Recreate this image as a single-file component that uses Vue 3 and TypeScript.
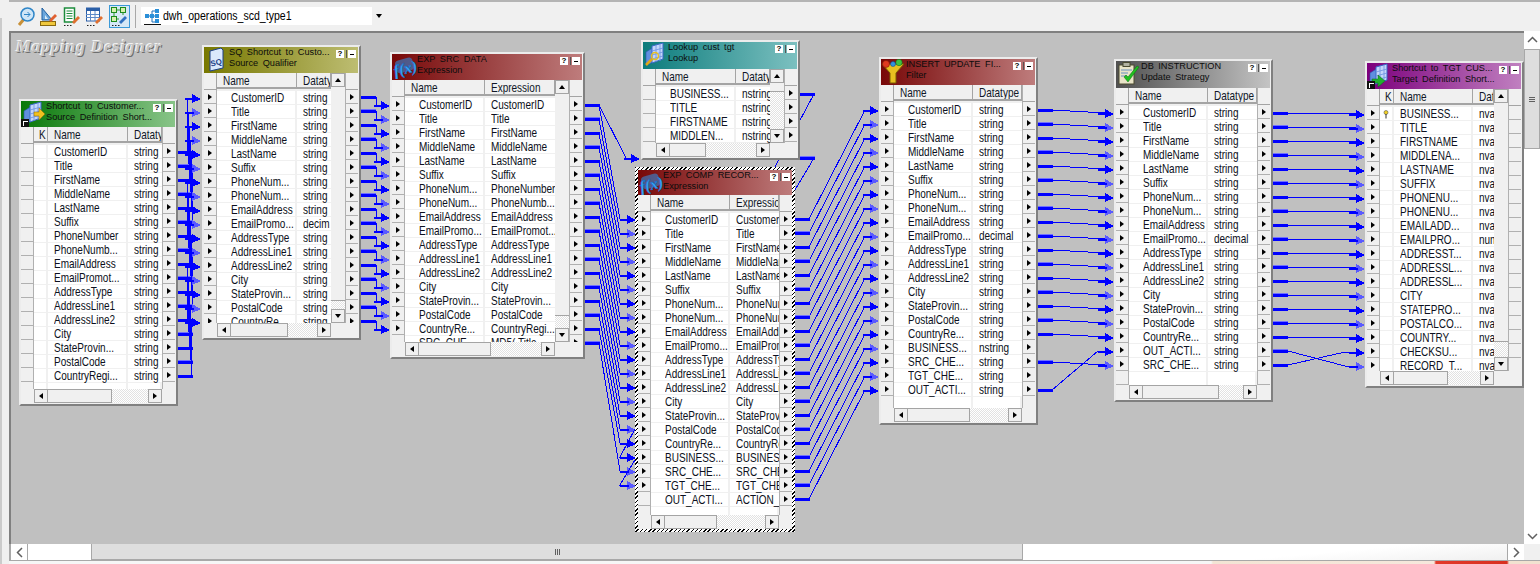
<template>
  <div class="designer">
    <div class="toolbar">
      <div class="tool">
        <svg width="18" height="20" viewBox="0 0 18 20">
          <path d="M2 18l5-6" stroke="#c89038" stroke-width="3" fill="none" />
          <circle cx="10.500" cy="7.500" r="6.500" fill="#cfe6f7" stroke="#2f86c8" stroke-width="1.500" />
          <path d="M7 7.500h6M10.500 5l2.500 2.500-2.500 2.500" stroke="#2f86c8" fill="none" />
        </svg>
      </div>
      <div class="tool">
        <svg width="18" height="20" viewBox="0 0 18 20">
          <path d="M2 1l10 12H2z" fill="#6aa6dc" stroke="#1f5f9f" />
          <path d="M5 8l3 4H5z" fill="#dcecf8" />
          <rect x="0.500" y="14.500" width="15" height="4" fill="#f0c83c" stroke="#8a6a10" />
          <path d="M9 13l6-6 2 2-6 6z" fill="#e06030" />
        </svg>
      </div>
      <div class="tool">
        <svg width="18" height="20" viewBox="0 0 18 20">
          <rect x="1.500" y="1" width="10" height="14" fill="#fff" stroke="#1c8c3c" stroke-width="1.500" />
          <path d="M3.500 4h6M3.500 6.500h6M3.500 9h6M3.500 11.500h6" stroke="#1c8c3c" />
          <path d="M9 15l6-6 2 2-6 6z" fill="#e07030" />
          <path d="M1 18.500h1.500M4 18.500h1.500M7 18.500h1.500" stroke="#222" />
        </svg>
      </div>
      <div class="tool">
        <svg width="18" height="20" viewBox="0 0 18 20">
          <rect x="0.500" y="1" width="13" height="13" fill="#fff" stroke="#2a5fa8" />
          <rect x="0.500" y="1" width="13" height="3" fill="#2a5fa8" />
          <path d="M0 7.500h13M0 10.500h13M4.500 4v10M9 4v10" stroke="#5d8ac8" />
          <path d="M9 15l6-6 2 2-6 6z" fill="#e07030" />
          <path d="M1 18.500h1.500M4 18.500h1.500M7 18.500h1.500" stroke="#222" />
        </svg>
      </div>
      <div class="tool tool-active">
        <svg width="18" height="20" viewBox="0 0 18 20">
          <path d="M3 3h9M3 3v9M12 3v5M3 12h5" stroke="#2c9c2c" fill="none" />
          <rect x="0.500" y="0.500" width="5" height="5" fill="#d8f0b0" stroke="#1c8c1c" />
          <rect x="9.500" y="0.500" width="5" height="5" fill="#d8f0b0" stroke="#1c8c1c" />
          <rect x="0.500" y="9.500" width="5" height="5" fill="#d8f0b0" stroke="#1c8c1c" />
          <path d="M8 15l6-6 2 2-6 6z" fill="#3070c0" />
          <path d="M1 18.500h1.500M4 18.500h1.500M7 18.500h1.500" stroke="#222" />
        </svg>
      </div>
      <div class="tool-sep"></div>
      <div class="combo">
        <svg class="combo-icon" width="17" height="17" viewBox="0 0 17 17">
          <path d="M3 8h5M8 3v11M8 3h3M8 8h3M8 14h3" stroke="#1f6fb8" fill="none" />
          <rect x="1" y="6" width="4" height="4" fill="#2a8fd8" />
          <rect x="6" y="6" width="4" height="4" fill="#2a8fd8" />
          <rect x="11" y="1" width="4" height="4" fill="#2a8fd8" />
          <rect x="11" y="6" width="4" height="4" fill="#2a8fd8" />
          <rect x="11" y="11" width="4" height="4" fill="#2a8fd8" />
          <path d="M0 16.500h17" stroke="#111" />
        </svg>
        <div class="combo-text"><span>dwh_operations_scd_type1</span></div>
        <div class="combo-drop"><i class="tri-down"></i></div>
      </div>
    </div>

    <div class="workspace">
      <div class="left-strip"></div>
      <div class="main">
        <div class="canvas-row">
          <div class="canvas">
            <div class="canvas-label">Mapping Designer</div>

            <svg class="wires" :width="canvasW" :height="canvasH" :viewBox="`${originX} ${originY} ${canvasW} ${canvasH}`">
              <g v-for="(w, i) in wires" :key="i">
                <polyline :points="w.line" class="wire" />
                <rect :x="w.sx" :y="w.sy - 1" width="15" height="3" fill="#0000ff" />
                <rect v-if="w.light" :x="w.sx" :y="w.sy - 2" width="15" height="1" fill="#7070ff" />
                <polygon :points="w.arrow" :fill="w.light ? '#5a5aff' : '#0000ff'" />
                <rect :x="w.ax - 16" :y="w.ay" width="9" height="2" fill="#0000ff" />
              </g>
            </svg>

            <div
              v-for="n in nodes"
              :key="n.id"
              class="node"
              :class="{ selected: n.selected }"
              :style="{ left: n.x - originX + 'px', top: n.y - originY + 'px', width: n.w + 'px', height: n.h + 'px' }"
            >
              <div class="node-inner">
                <div class="node-title" :style="{ height: n.titleH + 'px', background: n.gradient }">
                  <svg class="node-icon" width="25" height="25" viewBox="0 0 25 25">
                    <template v-if="n.icon === 'source' || n.icon === 'target' || n.icon === 'lookup'">
                      <path d="M3 10l8-5v15l-8 3z" fill="#5f8fe0" stroke="#2a55b0" stroke-width="0.600" />
                      <path d="M9 4l11-3v16L9 21z" fill="#c3d6fa" stroke="#3a68c8" />
                      <path d="M9 9l11-3M9 13l11-3M9 17l11-3M13 3v17M17 2v17" stroke="#6a90e0" stroke-width="0.800" />
                    </template>
                    <path v-if="n.icon === 'source'" d="M13 11h5V7l6 6-6 6v-4h-5z" fill="#f2c020" stroke="#8a6a00" stroke-width="0.500" />
                    <path v-if="n.icon === 'target'" d="M5 16h6v-4l7 6-7 6v-4H5z" fill="#20b030" stroke="#0a6a14" stroke-width="0.500" />
                    <g v-if="n.icon === 'lookup'">
                      <circle cx="12" cy="14" r="3.500" fill="none" stroke="#e8c020" stroke-width="1.500" />
                      <path d="M9 17l-6 6" stroke="#e0a818" stroke-width="2.500" />
                    </g>
                    <g v-if="n.icon === 'sq'">
                      <path d="M6 4l11-3 2 2v18l-13 3z" fill="#dbe8fb" stroke="#1c3f88" />
                      <text x="7" y="19" class="icon-text" transform="rotate(-12 9 19)">SQ</text>
                    </g>
                    <g v-if="n.icon === 'expr'">
                      <rect x="4" y="5" width="18" height="13" rx="4" fill="#2a96ee" opacity="0.550" transform="rotate(-16 12 13)" />
                      <text x="1" y="20" class="icon-expr" transform="rotate(-14 12 13)">f(x)</text>
                    </g>
                    <g v-if="n.icon === 'filter'">
                      <path d="M1 5h22l-8 9v10h-6V14z" fill="#e8bf20" stroke="#7a5c00" />
                      <circle cx="5" cy="5" r="3.500" fill="#e03a20" stroke="#701800" stroke-width="0.500" />
                      <circle cx="18" cy="3.500" r="3.200" fill="#40c040" stroke="#0a6010" stroke-width="0.500" />
                      <circle cx="12" cy="5" r="2.500" fill="#3090e0" stroke="#0a4080" stroke-width="0.500" />
                    </g>
                    <g v-if="n.icon === 'update'">
                      <rect x="3" y="4" width="15" height="19" fill="#e9e4c8" stroke="#4a4a30" />
                      <rect x="7" y="1.500" width="7" height="4" fill="#b0b0a0" stroke="#4a4a30" />
                      <path d="M5 9h11M5 12h7M5 15h6" stroke="#6a90c0" />
                      <path d="M8 16l4 5 11-15-2-1-9 11-2-2z" fill="#20c020" stroke="#0a6a10" stroke-width="0.500" />
                    </g>
                  </svg>
                  <div class="title-text">
                    <div>{{ n.title }}</div>
                    <div>{{ n.sub }}</div>
                  </div>
                  <span class="title-btn">?</span>
                  <span class="title-sep"></span>
                  <span class="title-btn title-btn-end"><i class="title-min"></i></span>
                  <span v-if="n.shortcut" class="shortcut"><i></i></span>
                </div>

                <div class="node-main">
                  <div class="port-col">
                    <div class="port-head"></div>
                    <div v-for="(r, i) in n.rows" :key="i" class="port-cell">
                      <i v-if="i < n.leftPorts" class="tri-right"></i>
                    </div>
                    <div class="port-cell"></div>
                    <div class="port-cell"></div>
                  </div>

                  <div class="table-col">
                    <div class="table-head">
                      <div v-if="n.keyW" class="head-cell head-key" :style="{ width: n.keyW + 'px' }"><span class="txt">K</span></div>
                      <div class="head-cell" :style="{ width: n.nameW + 'px' }"><span class="txt">Name</span></div>
                      <div class="head-cell" :style="{ width: n.typeW + 'px' }"><span class="txt">{{ n.typeHead }}</span></div>
                    </div>
                    <div class="table-rows">
                      <div v-for="(r, i) in n.rows" :key="i" class="table-row">
                        <div v-if="n.keyW" class="cell cell-key" :style="{ width: n.keyW + 'px' }">
                          <svg v-if="i === 0 && n.icon === 'target'" width="6" height="9" viewBox="0 0 6 9">
                            <circle cx="3" cy="2.500" r="2" fill="#f2d020" stroke="#555" stroke-width="0.600" />
                            <path d="M3 4v4.500" stroke="#333" />
                          </svg>
                        </div>
                        <div class="cell" :class="n.keyW ? 'cell-name-k' : 'cell-name'" :style="{ width: n.nameW + 'px' }"><span class="txt">{{ r[0] }}</span></div>
                        <div class="cell cell-type" :style="{ width: n.typeW + 'px' }"><span class="txt">{{ r[1] }}</span></div>
                      </div>
                      <div class="table-row" v-for="b in 2" :key="'b' + b">
                        <div v-if="n.keyW" class="cell" :style="{ width: n.keyW + 'px' }"></div>
                        <div class="cell" :style="{ width: n.nameW + 'px' }"></div>
                        <div class="cell" :style="{ width: n.typeW + 'px' }"></div>
                      </div>
                    </div>
                  </div>

                  <div v-if="n.vThumb" class="vscroll">
                    <div class="sb-btn"><i class="tri-up"></i></div>
                    <div class="sb-vthumb" :style="{ height: n.vThumb + 'px' }"></div>
                    <div class="sb-dither"></div>
                    <div class="sb-btn"><i class="tri-down"></i></div>
                  </div>

                  <div class="port-col">
                    <div class="port-head"></div>
                    <div v-for="(r, i) in n.rows" :key="i" class="port-cell">
                      <i v-if="i < n.rightPorts" class="tri-right"></i>
                    </div>
                    <div class="port-cell"></div>
                    <div class="port-cell"></div>
                  </div>
                </div>

                <div class="hscroll-row">
                  <div class="corner corner-port"></div>
                  <div class="hscroll">
                    <div class="sb-btn"><i class="tri-left"></i></div>
                    <div class="sb-hthumb" :style="{ width: n.hThumb + 'px' }"></div>
                    <div class="sb-dither"></div>
                    <div class="sb-btn"><i class="tri-right"></i></div>
                  </div>
                  <div v-if="n.vThumb" class="corner corner-v"></div>
                  <div class="corner corner-port"></div>
                </div>
              </div>
            </div>
          </div>

          <div class="win-vscroll">
            <div class="win-arrow">
              <svg width="11" height="7" viewBox="0 0 11 7"><path d="M1 6l4.500-4.500L10 6" fill="none" stroke="#606060" stroke-width="1.500" /></svg>
            </div>
            <div class="win-vthumb">
              <span></span><span></span><span></span>
            </div>
            <div class="win-vtrack"></div>
            <div class="win-arrow">
              <svg width="11" height="7" viewBox="0 0 11 7"><path d="M1 1l4.500 4.500L10 1" fill="none" stroke="#606060" stroke-width="1.500" /></svg>
            </div>
          </div>
        </div>

        <div class="win-hscroll">
          <div class="win-arrow win-arrow-h">
            <svg width="7" height="11" viewBox="0 0 7 11"><path d="M6 1L1.500 5.500 6 10" fill="none" stroke="#606060" stroke-width="1.500" /></svg>
          </div>
          <div class="win-htrack win-htrack-left"></div>
          <div class="win-hthumb">
            <span></span><span></span><span></span>
          </div>
          <div class="win-htrack win-htrack-right"></div>
          <div class="win-arrow win-arrow-h win-arrow-end">
            <svg width="7" height="11" viewBox="0 0 7 11"><path d="M1 1l4.500 4.500L1 10" fill="none" stroke="#606060" stroke-width="1.500" /></svg>
          </div>
          <div class="win-corner"></div>
        </div>
        <div class="bottom-strip"></div>
      </div>
    </div>
  </div>
</template>

<script setup lang="ts">
type Row = [string, string]

interface DesignerNode {
  id: string
  icon: string
  title: string
  sub: string
  gradient: string
  x: number
  y: number
  w: number
  h: number
  titleH: number
  keyW: number
  nameW: number
  typeW: number
  typeHead: string
  rows: Row[]
  leftPorts: number
  rightPorts: number
  vThumb: number
  hThumb: number
  selected?: boolean
  shortcut?: boolean
}

interface Wire {
  line: string
  arrow: string
  sx: number
  sy: number
  ax: number
  ay: number
  light: boolean
}

const originX = 11
const originY = 33
const canvasW = 1513
const canvasH = 511

const green = 'linear-gradient(90deg, #087808, #88c488)'
const olive = 'linear-gradient(90deg, #787800, #bdbd72)'
const red = 'linear-gradient(90deg, #780808, #be7c7c)'
const teal = 'linear-gradient(90deg, #0c7c7c, #7cc0c0)'
const gray = 'linear-gradient(90deg, #505050, #c4c4c4)'
const purple = 'linear-gradient(90deg, #7c007c, #c080c0)'

function withType(names: string[], special: Record<number, string> = {}, base = 'string'): Row[] {
  return names.map((name, i) => [name, special[i] ?? base])
}

const sourceNames = [
  'CustomerID', 'Title', 'FirstName', 'MiddleName', 'LastName', 'Suffix', 'PhoneNumber', 'PhoneNumb...',
  'EmailAddress', 'EmailPromot...', 'AddressType', 'AddressLine1', 'AddressLine2', 'City', 'StateProvin...',
  'PostalCode', 'CountryRegi...',
]
const portNames = [
  'CustomerID', 'Title', 'FirstName', 'MiddleName', 'LastName', 'Suffix', 'PhoneNum...', 'PhoneNum...',
  'EmailAddress', 'EmailPromo...', 'AddressType', 'AddressLine1', 'AddressLine2', 'City', 'StateProvin...',
  'PostalCode', 'CountryRe...',
]
const exprValues = [
  'CustomerID', 'Title', 'FirstName', 'MiddleName', 'LastName', 'Suffix', 'PhoneNumber', 'PhoneNumb...',
  'EmailAddress', 'EmailPromot...', 'AddressType', 'AddressLine1', 'AddressLine2', 'City', 'StateProvin...',
  'PostalCode', 'CountryRegi...',
]

const nodes: DesignerNode[] = [
  {
    id: 'src', icon: 'source', title: 'Shortcut to Customer...', sub: 'Source Definition Short...', gradient: green,
    x: 19, y: 99, w: 159, h: 307, titleH: 26, keyW: 14, nameW: 80, typeW: 34, typeHead: 'Datatype',
    rows: withType(sourceNames), leftPorts: 0, rightPorts: 17, vThumb: 0, hThumb: 64, shortcut: true,
  },
  {
    id: 'sq', icon: 'sq', title: 'SQ Shortcut to Custo...', sub: 'Source Qualifier', gradient: olive,
    x: 202, y: 45, w: 159, h: 295, titleH: 26, keyW: 0, nameW: 80, typeW: 34, typeHead: 'Datatype',
    rows: withType(portNames, { 9: 'decim' }), leftPorts: 17, rightPorts: 17, vThumb: 214, hThumb: 57,
  },
  {
    id: 'exp', icon: 'expr', title: 'EXP SRC DATA', sub: 'Expression', gradient: red,
    x: 390, y: 52, w: 195, h: 307, titleH: 26, keyW: 0, nameW: 80, typeW: 70, typeHead: 'Expression',
    rows: [...portNames.map((name, i): Row => [name, exprValues[i]]), ['SRC_CHE...', 'MD5( Title...']],
    leftPorts: 17, rightPorts: 18, vThumb: 222, hThumb: 72,
  },
  {
    id: 'lkp', icon: 'lookup', title: 'Lookup cust tgt', sub: 'Lookup', gradient: teal,
    x: 641, y: 40, w: 159, h: 120, titleH: 27, keyW: 0, nameW: 80, typeW: 34, typeHead: 'Datatype',
    rows: withType(['BUSINESS...', 'TITLE', 'FIRSTNAME', 'MIDDLEN...'], {}, 'nstring'),
    leftPorts: 0, rightPorts: 4, vThumb: 9, hThumb: 36,
  },
  {
    id: 'comp', icon: 'expr', title: 'EXP COMP RECOR...', sub: 'Expression', gradient: red,
    x: 635, y: 167, w: 160, h: 365, titleH: 25, keyW: 0, nameW: 79, typeW: 49, typeHead: 'Expression',
    rows: [
      ...portNames.map((name, i): Row => [name, exprValues[i]]),
      ['BUSINESS...', 'BUSINESS...'], ['SRC_CHE...', 'SRC_CHECK'], ['TGT_CHE...', 'TGT_CHECK'], ['OUT_ACTI...', 'ACTION_...'],
    ],
    leftPorts: 20, rightPorts: 21, vThumb: 0, hThumb: 52, selected: true,
  },
  {
    id: 'flt', icon: 'filter', title: 'INSERT UPDATE FI...', sub: 'Filter', gradient: red,
    x: 879, y: 57, w: 159, h: 368, titleH: 26, keyW: 0, nameW: 79, typeW: 49, typeHead: 'Datatype',
    rows: [...withType(portNames, { 9: 'decimal' }), ['BUSINESS...', 'nstring'], ['SRC_CHE...', 'string'], ['TGT_CHE...', 'string'], ['OUT_ACTI...', 'string']],
    leftPorts: 21, rightPorts: 21, vThumb: 0, hThumb: 62,
  },
  {
    id: 'upd', icon: 'update', title: 'DB INSTRUCTION', sub: 'Update Strategy', gradient: gray,
    x: 1114, y: 59, w: 159, h: 343, titleH: 27, keyW: 0, nameW: 79, typeW: 49, typeHead: 'Datatype',
    rows: [...withType(portNames, { 9: 'decimal' }), ['OUT_ACTI...', 'string'], ['SRC_CHE...', 'string']],
    leftPorts: 19, rightPorts: 19, vThumb: 0, hThumb: 76,
  },
  {
    id: 'tgt', icon: 'target', title: 'Shortcut to TGT CUS...', sub: 'Target Definition Short...', gradient: purple,
    x: 1365, y: 61, w: 159, h: 327, titleH: 26, keyW: 14, nameW: 79, typeW: 21, typeHead: 'Datatype',
    rows: withType(
      ['BUSINESS...', 'TITLE', 'FIRSTNAME', 'MIDDLENA...', 'LASTNAME', 'SUFFIX', 'PHONENU...', 'PHONENU...', 'EMAILADD...',
        'EMAILPRO...', 'ADDRESST...', 'ADDRESSL...', 'ADDRESSL...', 'CITY', 'STATEPRO...', 'POSTALCO...', 'COUNTRY...', 'CHECKSU...', 'RECORD_T...'],
      { 9: 'numeric' }, 'nvarchar'),
    leftPorts: 19, rightPorts: 0, vThumb: 239, hThumb: 54, shortcut: true,
  },
]

function makeWire(sx: number, sy: number, mids: [number, number][], ax: number, ay: number, index: number): Wire {
  const pts: [number, number][] = [[sx + 14, sy], ...mids, [ax - 8, ay]]
  return {
    line: pts.map((p) => `${p[0]},${p[1]}`).join(' '),
    arrow: `${ax - 9},${ay - 4} ${ax},${ay + 1} ${ax - 9},${ay + 5}`,
    sx,
    sy,
    ax,
    ay,
    light: index % 2 === 1,
  }
}

const wires: Wire[] = []

// source -> source qualifier
for (let i = 0; i < 17; i++) {
  const mx = 187 + (i % 6)
  wires.push(makeWire(178, 152 + 14 * i, [[mx, 152 + 14 * i], [mx, 98 + 14 * i]], 201, 98 + 14 * i, i))
}
// source qualifier -> expression
for (let i = 0; i < 17; i++) {
  wires.push(makeWire(361, 97 + 14 * i, [[376, 97 + 14 * i], [376, 105 + 14 * i]], 390, 105 + 14 * i, i))
}
// expression -> comp expression, lookup
wires.push(makeWire(585, 105, [[626, 158]], 640, 158, 0))
for (let i = 0; i < 17; i++) {
  wires.push(makeWire(585, 105 + 14 * i, [[620, 219 + 14 * i]], 636, 219 + 14 * i, i))
}
wires.push(makeWire(585, 343, [[620, 471]], 636, 471, 1))
wires.push(makeWire(800, 94, [[620, 457]], 636, 457, 0))
wires.push(makeWire(800, 158, [[620, 485]], 636, 485, 1))
// comp expression -> filter
for (let i = 0; i < 21; i++) {
  wires.push(makeWire(795, 219 + 14 * i, [[865, 110 + 14 * i]], 879, 110 + 14 * i, i))
}
// filter -> update strategy
for (let i = 0; i < 17; i++) {
  wires.push(makeWire(1038, 110 + 14 * i, [], 1114, 113 + 14 * i, i))
}
wires.push(makeWire(1038, 362, [], 1114, 365, 1))
wires.push(makeWire(1038, 390, [[1098, 351]], 1114, 351, 0))
// update strategy -> target
for (let i = 0; i < 17; i++) {
  wires.push(makeWire(1273, 113 + 14 * i, [], 1365, 114 + 14 * i, i))
}
wires.push(makeWire(1273, 351, [[1288, 351], [1345, 366]], 1365, 366, 1))
wires.push(makeWire(1273, 365, [[1288, 365], [1345, 352]], 1365, 352, 0))
</script>

<style>
html,
body {
  margin: 0;
  width: 1540px;
  height: 564px;
  overflow: hidden;
  background: #f0f0f0;
}
</style>

<style scoped>
.designer {
  width: 1540px;
  height: 564px;
  display: flex;
  flex-direction: column;
  background: #f0f0f0;
  font-family: "Liberation Sans", Arial, sans-serif;
  color: #000;
  overflow: hidden;
}

.toolbar {
  height: 31px;
  box-sizing: border-box;
  margin-left: 9px;
  border-top: 2px solid #b4b4b4;
  padding: 3px 0 0 7px;
  display: flex;
  align-items: flex-start;
  gap: 3px;
}

.tool {
  width: 20px;
  height: 23px;
  display: flex;
  align-items: center;
  justify-content: center;
}

.tool-active {
  margin-left: 1px;
  width: 21px;
  box-sizing: border-box;
  background: #d6e8f6;
  border: 1px solid #3c9ad8;
}

.tool-sep {
  width: 1px;
  height: 23px;
  margin: 0 2px;
  background: #a8a8a8;
}

.combo {
  width: 245px;
  height: 18px;
  margin-top: 2px;
  background: #fff;
  display: flex;
  align-items: center;
  padding-left: 3px;
  box-sizing: border-box;
}

.combo-icon {
  flex: none;
}

.combo-text {
  flex: 1;
  min-width: 0;
  font-size: 12px;
  padding-left: 2px;
  white-space: nowrap;
}

.combo-text span {
  display: inline-block;
  transform: scaleX(0.88);
  transform-origin: 0 50%;
}

.combo-drop {
  width: 14px;
  height: 18px;
  background: #f0f0f0;
  display: flex;
  align-items: center;
  justify-content: center;
}

.workspace {
  flex: 1;
  display: flex;
  min-height: 0;
}

.left-strip {
  width: 7px;
  margin-right: 2px;
  box-sizing: border-box;
  border-left: 2px solid #cbcbcb;
  background: #f0f0f0;
  margin-top: -13px;
}

.main {
  flex: 1;
  display: flex;
  flex-direction: column;
  min-width: 0;
}

.canvas-row {
  display: flex;
  height: 513px;
}

.canvas {
  position: relative;
  width: 1515px;
  box-sizing: border-box;
  background: #c0c0c0;
  border-top: 2px solid #808080;
  border-left: 2px solid #808080;
  overflow: hidden;
}

.canvas-label {
  position: absolute;
  left: 5px;
  top: 4px;
  font-family: "Liberation Serif", "Times New Roman", serif;
  font-style: italic;
  font-weight: bold;
  font-size: 17px;
  letter-spacing: 0.950px;
  white-space: nowrap;
  color: #c4c4c4;
  text-shadow: -1px -1px 0 #f4f4f4, 1px 1px 0 #6e6e6e;
}

.wires {
  position: absolute;
  left: 0;
  top: 0;
  shape-rendering: crispEdges;
}

.wire {
  fill: none;
  stroke: #0000ff;
  stroke-width: 1;
}

.node {
  position: absolute;
  box-sizing: border-box;
  border-style: solid;
  border-width: 2px;
  border-color: #ececec #808080 #808080 #ececec;
  background: #f0f0f0;
  padding: 0 1px 1px 0;
}

.node.selected {
  border: 3px solid transparent;
  padding: 0;
  background: repeating-linear-gradient(135deg, #000 0 1px, #fff 1px 3px) border-box;
}

.node-inner {
  height: 100%;
  display: flex;
  flex-direction: column;
  background: #f0f0f0;
  overflow: hidden;
}

.node-title {
  flex: none;
  position: relative;
  display: flex;
  align-items: flex-start;
  box-sizing: border-box;
  overflow: hidden;
}

.node-icon {
  flex: none;
}

.icon-text {
  font: bold 8px "Liberation Sans", Arial, sans-serif;
  fill: #1c3f88;
}

.icon-expr {
  font: italic bold 16px "Liberation Serif", serif;
  fill: #3aa8f6;
  stroke: #0b5fc0;
  stroke-width: 0.400px;
}

.title-text {
  flex: 1;
  min-width: 0;
  font-size: 9.200px;
  line-height: 11px;
  word-spacing: 2px;
  color: #0c0c0c;
  white-space: nowrap;
  overflow: hidden;
}

.title-btn {
  flex: none;
  width: 8px;
  height: 8px;
  margin-top: 3px;
  background: #fff;
  font: bold 8px/8px "Liberation Sans", Arial, sans-serif;
  text-align: center;
  display: flex;
  align-items: center;
  justify-content: center;
}

.title-sep {
  flex: none;
  width: 1px;
  height: 8px;
  margin: 3px 1px 0 2px;
  background: #555;
}

.title-btn-end {
  margin-right: 2px;
}

.title-min {
  display: block;
  width: 4px;
  height: 1px;
  background: #000;
}

.shortcut {
  position: absolute;
  left: 0;
  bottom: 0;
  width: 8px;
  height: 8px;
  background: #111;
  display: flex;
  align-items: center;
  justify-content: center;
}

.shortcut i {
  display: block;
  width: 4px;
  height: 4px;
  border-top: 1px solid #fff;
  border-left: 1px solid #fff;
}

.node-main {
  flex: 1;
  min-height: 0;
  display: flex;
  overflow: hidden;
}

.port-col {
  flex: none;
  width: 13px;
  background: #f0f0f0;
}

.port-head {
  height: 17px;
  box-sizing: border-box;
  border-bottom: 1px solid #a4a4a4;
  border-right: 1px solid #a4a4a4;
}

.port-cell {
  height: 14px;
  box-sizing: border-box;
  border-bottom: 1px solid #b0b0b0;
  border-right: 1px solid #b0b0b0;
  display: flex;
  align-items: center;
  justify-content: center;
}

.port-col:last-child .port-head,
.port-col:last-child .port-cell {
  border-right: none;
  border-left: 1px solid #b0b0b0;
}

.table-col {
  flex: none;
  display: flex;
  flex-direction: column;
  overflow: hidden;
  background: #f0f0f0;
}

.table-head {
  flex: none;
  height: 18px;
  display: flex;
}

.txt {
  display: inline-block;
  transform: scaleX(0.82);
  transform-origin: 0 50%;
}

.head-cell {
  flex: none;
  box-sizing: border-box;
  padding-left: 6px;
  height: 16px;
  line-height: 16px;
  font-size: 12.200px;
  color: #101828;
  overflow: hidden;
  white-space: nowrap;
  border-right: 1px solid #a4a4a4;
  border-bottom: 2px solid #a4a4a4;
}

.head-key {
  padding-left: 5px;
}

.table-rows {
  flex: 1;
  background: #fff;
}

.table-row {
  height: 14px;
  display: flex;
  background: #f0f0f0;
}

.cell {
  flex: none;
  box-sizing: border-box;
  height: 14px;
  background: linear-gradient(#fff 13px, #f0f0f0 13px);
  border-right: 2px solid #f0f0f0;
  font-size: 12.200px;
  line-height: 14px;
  color: #0c1020;
  white-space: nowrap;
  overflow: hidden;
}

.cell-key {
  display: flex;
  align-items: center;
  justify-content: center;
}

.cell-name {
  padding-left: 14px;
}

.cell-name-k {
  padding-left: 6px;
}

.cell-type {
  padding-left: 6px;
  border-right: none;
}

.vscroll {
  flex: none;
  width: 14px;
  display: flex;
  flex-direction: column;
  height: 100%;
  background: #f0f0f0;
}

.sb-btn {
  flex: none;
  width: 14px;
  height: 14px;
  box-sizing: border-box;
  background: #f0f0f0;
  border: 1px solid #a4a4a4;
  display: flex;
  align-items: center;
  justify-content: center;
}

.sb-vthumb {
  flex: none;
  box-sizing: border-box;
  background: #f0f0f0;
  border-bottom: 1px solid #a4a4a4;
}

.sb-hthumb {
  flex: none;
  box-sizing: border-box;
  background: #f0f0f0;
  border: 1px solid #a4a4a4;
  border-left: none;
}

.sb-dither {
  flex: 1;
  min-height: 0;
  background: repeating-conic-gradient(#e2e2e2 0 25%, #fff 0 50%) 0 0 / 2px 2px;
}

.hscroll-row {
  flex: none;
  height: 14px;
  display: flex;
}

.corner {
  flex: none;
  box-sizing: border-box;
  background: #f0f0f0;
}

.corner-port {
  width: 13px;
}

.corner-v {
  width: 14px;
}

.hscroll {
  flex: 1;
  display: flex;
  min-width: 0;
}

.tri-right,
.tri-left,
.tri-up,
.tri-down {
  display: block;
  width: 0;
  height: 0;
  border-style: solid;
  border-color: transparent;
}

.tri-right {
  border-width: 3.500px 0 3.500px 4px;
  border-left-color: #000;
}

.tri-left {
  border-width: 3.500px 4px 3.500px 0;
  border-right-color: #000;
}

.tri-up {
  border-width: 0 3.500px 4px;
  border-bottom-color: #000;
}

.tri-down {
  border-width: 4px 3.500px 0;
  border-top-color: #000;
}

.win-vscroll {
  width: 16px;
  display: flex;
  flex-direction: column;
  background: #fff;
}

.win-arrow {
  flex: none;
  height: 16px;
  background: #fff;
  display: flex;
  align-items: center;
  justify-content: center;
}

.win-arrow-h {
  width: 16px;
  border-right: 1px solid #a8a8a8;
}

.win-arrow-end {
  border-right: none;
  border-left: 1px solid #a8a8a8;
}

.win-vthumb {
  flex: none;
  height: 100px;
  margin-top: 2px;
  box-sizing: border-box;
  background: #dedede;
  border: 1px solid #a8a8a8;
  display: flex;
  flex-direction: column;
  align-items: center;
  justify-content: center;
  gap: 1px;
}

.win-vthumb span {
  display: block;
  width: 6px;
  height: 1px;
  background: #606060;
}

.win-vtrack {
  flex: 1;
}

.win-hscroll {
  height: 16px;
  display: flex;
  background: #fff;
  box-sizing: border-box;
  border-left: 2px solid #a8a8a8;
}

.win-htrack {
  background: #fff;
}

.win-htrack-left {
  width: 63px;
}

.win-htrack-right {
  flex: 1;
  background: linear-gradient(175deg, #fff 60%, #f0f0f0);
}

.win-hthumb {
  flex: none;
  width: 932px;
  box-sizing: border-box;
  background: #dedede;
  border: 1px solid #a8a8a8;
  border-top: none;
  display: flex;
  align-items: center;
  justify-content: center;
  gap: 1px;
}

.win-hthumb span {
  display: block;
  width: 1px;
  height: 6px;
  background: #606060;
}

.win-corner {
  flex: none;
  width: 16px;
  background: #f0f0f0;
}

.bottom-strip {
  flex: 1;
  border-top: 1px solid #a8a8a8;
  background: linear-gradient(90deg, #f6f6f6 0, #f6f6f6 1202px, #f3e4d4 1204px, #f6e8dc 1425px, #e23a2a 1427px, #d83020 1498px, #f2e2d0 1500px);
}
</style>
